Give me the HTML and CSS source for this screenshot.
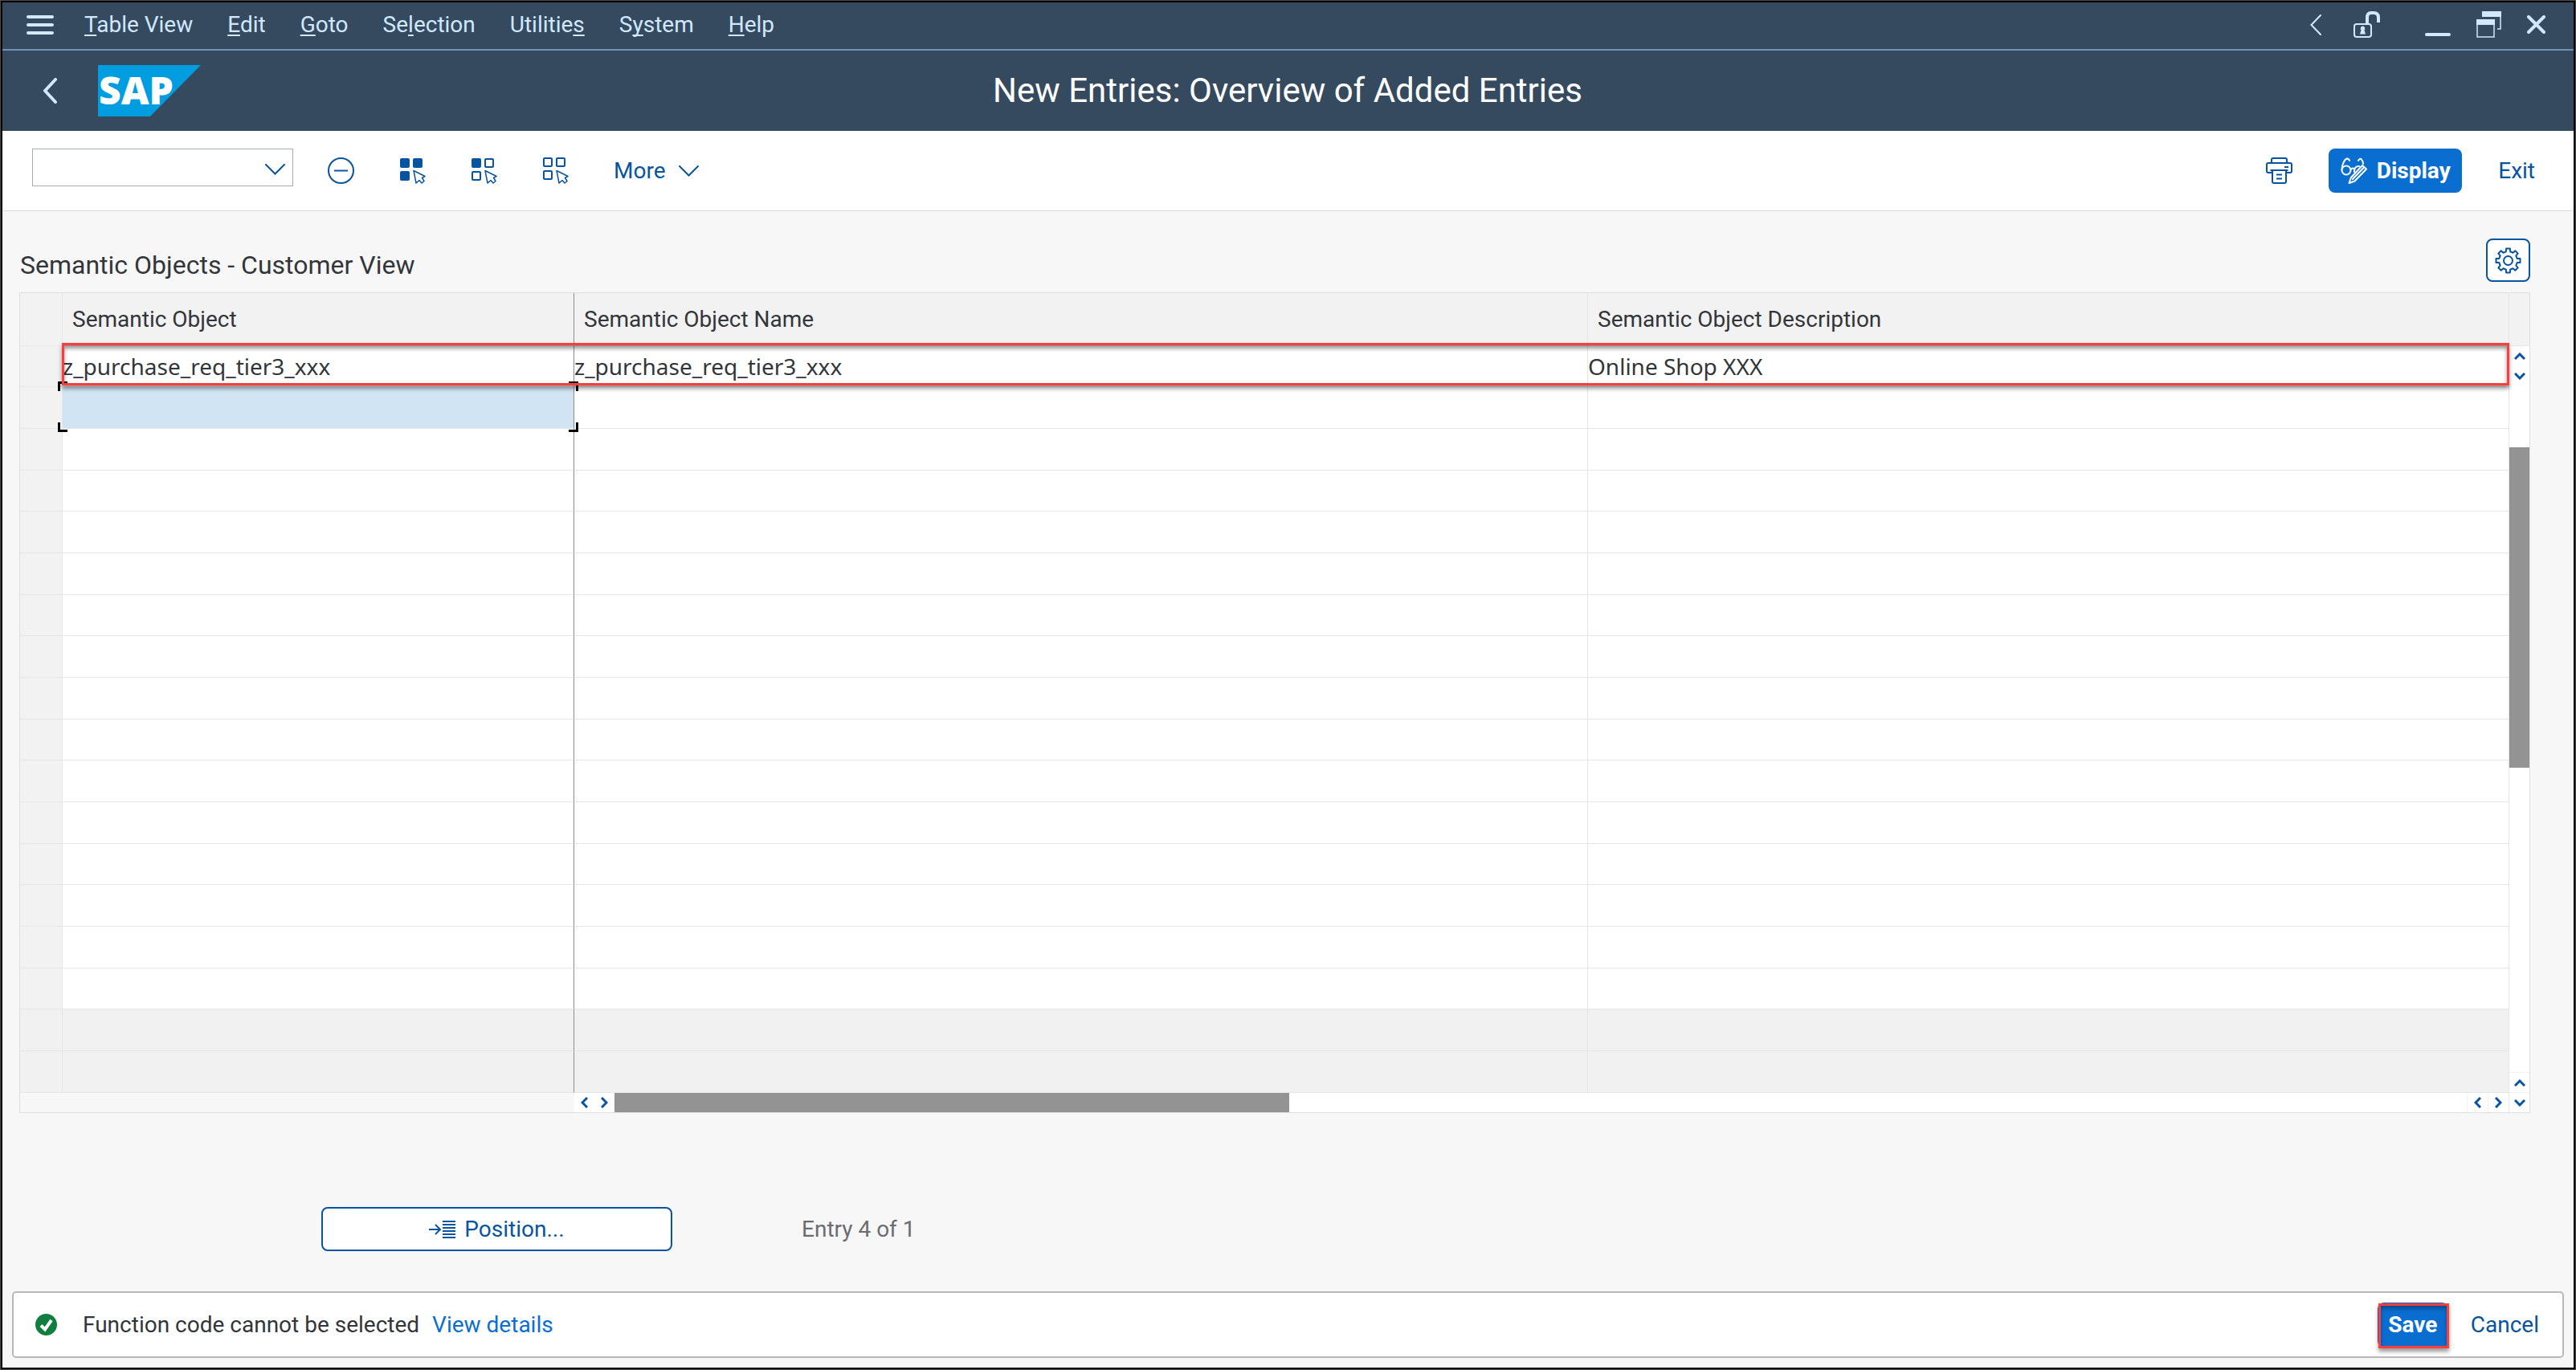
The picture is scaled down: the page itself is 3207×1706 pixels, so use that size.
FILE: index.html
```html
<!DOCTYPE html>
<html lang="en">
<head>
<meta charset="utf-8">
<title>New Entries: Overview of Added Entries</title>
<link rel="stylesheet" href="styles.css">
</head>
<body>
<nav class="menubar" aria-label="Menu bar">
  <button class="icon-btn hamburger" aria-label="Menu"><svg width="34" height="26" viewBox="0 0 34 26"><path d="M2 3H32M2 13H32M2 23H32" stroke="currentColor" stroke-width="4" stroke-linecap="round"/></svg></button>
  <div class="menus">
    <button><u>T</u>able View</button>
    <button><u>E</u>dit</button>
    <button><u>G</u>oto</button>
    <button>Se<u>l</u>ection</button>
    <button>Utilitie<u>s</u></button>
    <button>S<u>y</u>stem</button>
    <button><u>H</u>elp</button>
  </div>
  <div class="session-tools">
    <button class="icon-btn" aria-label="Collapse"><svg width="14" height="26" viewBox="0 0 14 26"><path d="M13 1L1.500 13L13 25" fill="none" stroke="currentColor" stroke-width="2" stroke-linecap="round"/></svg></button>
    <button class="icon-btn" aria-label="Unlock"><svg width="33" height="33" viewBox="0 0 33 33" fill="none" stroke="currentColor"><rect x="1" y="16" width="21" height="16" rx="3" stroke-width="2"/><path d="M17 15V8Q17 2 22 2H25Q31 2 31 8V14" stroke-width="4"/><path d="M11.500 18.500a3 3 0 0 1 2 5l1.500 5h-7l1.500-5a3 3 0 0 1 2-5z" fill="currentColor" stroke="none"/></svg></button>
  </div>
  <div class="window-tools">
    <button class="icon-btn" aria-label="Minimize"><svg width="32" height="33" viewBox="0 0 32 33"><path d="M2 29H30" stroke="currentColor" stroke-width="4" stroke-linecap="round"/></svg></button>
    <button class="icon-btn" aria-label="Restore"><svg width="31" height="33" viewBox="0 0 31 33" fill="none" stroke="currentColor" stroke-width="1.500"><path d="M7 0H31V7H7ZM0 10H23V17H0Z" fill="currentColor" stroke="none"/><path d="M1 16V32H22V16M30 6V22H26"/></svg></button>
    <button class="icon-btn" aria-label="Close"><svg width="23" height="23" viewBox="0 0 23 23"><path d="M2 2L21 21M21 2L2 21" stroke="currentColor" stroke-width="4" stroke-linecap="round"/></svg></button>
  </div>
</nav>

<header class="header">
  <div class="brand">
    <button class="icon-btn" aria-label="Back"><svg width="18" height="32" viewBox="0 0 18 32"><path d="M16 2L3 16L16 30" fill="none" stroke="currentColor" stroke-width="4" stroke-linecap="round" stroke-linejoin="round"/></svg></button>
    <svg class="logo" width="128" height="64" viewBox="0 0 128 64" role="img" aria-label="SAP"><path d="M0 0H128L65 64H0Z" fill="#009de0"/><text x="1" y="49" fill="#fff">SAP</text></svg>
  </div>
  <h1>New Entries: Overview of Added Entries</h1>
</header>

<div class="toolbar">
  <div class="combo">
    <select aria-label="Command"><option></option></select>
    <svg class="combo-arrow" width="25" height="14" viewBox="0 0 25 14"><path d="M1 1L12.500 12.500L24 1" fill="none" stroke="currentColor" stroke-width="2" stroke-linecap="round"/></svg>
  </div>
  <div class="tools">
    <button class="icon-btn" aria-label="Delete"><svg width="33" height="33" viewBox="0 0 33 33" fill="none" stroke="currentColor" stroke-width="2"><circle cx="16.500" cy="16.500" r="15.500"/><path d="M8 16.500H25"/></svg></button>
    <button class="icon-btn" aria-label="Select all"><svg width="33" height="33" viewBox="0 0 33 33" fill="none" stroke="currentColor"><g fill="currentColor" stroke-width="2"><rect x="2" y="2" width="10" height="10" rx="1"/><rect x="18" y="2" width="10" height="10" rx="1"/><rect x="2" y="18" width="10" height="10" rx="1"/></g><path d="M18 16.500L32 23.500L28.500 25.500L31 29.500L28 32L25 28.500L21 32Z" stroke-width="1.500" stroke-linejoin="round"/></svg></button>
    <button class="icon-btn" aria-label="Select block"><svg width="33" height="33" viewBox="0 0 33 33" fill="none" stroke="currentColor"><g stroke-width="2"><rect x="2" y="2" width="10" height="10" rx="1" fill="currentColor"/><rect x="18" y="2" width="10" height="10" rx="1"/><rect x="2" y="18" width="10" height="10" rx="1"/></g><path d="M18 16.500L32 23.500L28.500 25.500L31 29.500L28 32L25 28.500L21 32Z" stroke-width="1.500" stroke-linejoin="round"/></svg></button>
    <button class="icon-btn" aria-label="Deselect all"><svg width="33" height="33" viewBox="0 0 33 33" fill="none" stroke="currentColor"><g stroke-width="2"><rect x="2" y="1" width="10" height="10" rx="1"/><rect x="18" y="1" width="10" height="10" rx="1"/><rect x="2" y="17" width="10" height="10" rx="1"/></g><path d="M18 16.500L32 23.500L28.500 25.500L31 29.500L28 32L25 28.500L21 32Z" stroke-width="1.500" stroke-linejoin="round"/></svg></button>
    <button class="more">More <svg width="25" height="14" viewBox="0 0 25 14"><path d="M1 1L12.500 12.500L24 1" fill="none" stroke="currentColor" stroke-width="2" stroke-linecap="round"/></svg></button>
  </div>
  <div class="tools-end">
    <button class="icon-btn" aria-label="Print"><svg width="33" height="33" viewBox="0 0 33 33" fill="none" stroke="currentColor" stroke-width="2" stroke-linejoin="round"><path d="M7 6V3Q7 1 9 1H24Q26 1 26 3V6M7 19H3Q1 19 1 17V9Q1 7 3 7H30Q32 7 32 9V17Q32 19 30 19H26"/><path d="M5.500 16H27.500M8 16V30Q8 32 10 32H23Q25 32 25 30V16M13 21.500H20M13 26.500H20M23 12H28"/></svg></button>
    <button class="primary"><svg width="33" height="33" viewBox="0 0 33 33" fill="none" stroke="currentColor" stroke-width="2" stroke-linejoin="round" stroke-linecap="round"><circle cx="7" cy="16" r="5.500"/><path d="M1.500 15C1.500 9 5 2 8 1.500Q10 1.500 11 4M12.500 15Q15 12 17.500 15M17 18Q16.500 11 23 11M22 4Q24 .5 26 2.500Q28 5 28 8"/><path d="M10.500 32L13 25L27 10L32 14.500L17.500 29.500ZM15 27L28 13.500"/></svg>Display</button>
    <button class="text-btn">Exit</button>
  </div>
</div>

<main>
  <div class="title-row">
    <h2>Semantic Objects - Customer View</h2>
    <button class="settings" aria-label="Table settings"><svg width="33" height="33" viewBox="-16.500 -16.500 33 33" fill="none" stroke="currentColor" stroke-width="2" stroke-linejoin="round"><circle r="5.500"/><path d="M-2.600-11.200L-2.400-15 2.400-15 2.600-11.200 6.100-9.800 8.800-12.200 12.200-8.800 9.800-6.100 11.200-2.600 15-2.400 15 2.400 11.200 2.600 9.800 6.100 12.200 8.800 8.800 12.200 6.100 9.800 2.600 11.200 2.400 15 -2.400 15 -2.600 11.200 -6.100 9.800 -8.800 12.200 -12.200 8.800 -9.800 6.100 -11.200 2.600 -15 2.400 -15-2.400 -11.200-2.600 -9.800-6.100 -12.200-8.800 -8.800-12.200 -6.100-9.800Z"/></svg></button>
  </div>

  <div class="grid-frame">
    <div class="grid-body">
      <table>
        <colgroup><col class="c-sel"><col class="c-obj"><col class="c-name"><col></colgroup>
        <thead><tr><th></th><th scope="col">Semantic Object</th><th scope="col">Semantic Object Name</th><th scope="col">Semantic Object Description</th></tr></thead>
        <tbody>
          <tr class="marked"><td></td><td>z_purchase_req_tier3_xxx</td><td>z_purchase_req_tier3_xxx</td><td>Online Shop XXX<span class="row-mark"></span></td></tr>
          <tr><td></td><td class="active"><input type="text" aria-label="Semantic Object"><span class="focus-corners"></span></td><td></td><td></td></tr>
          <tr><td></td><td></td><td></td><td></td></tr>
          <tr><td></td><td></td><td></td><td></td></tr>
          <tr><td></td><td></td><td></td><td></td></tr>
          <tr><td></td><td></td><td></td><td></td></tr>
          <tr><td></td><td></td><td></td><td></td></tr>
          <tr><td></td><td></td><td></td><td></td></tr>
          <tr><td></td><td></td><td></td><td></td></tr>
          <tr><td></td><td></td><td></td><td></td></tr>
          <tr><td></td><td></td><td></td><td></td></tr>
          <tr><td></td><td></td><td></td><td></td></tr>
          <tr><td></td><td></td><td></td><td></td></tr>
          <tr><td></td><td></td><td></td><td></td></tr>
          <tr><td></td><td></td><td></td><td></td></tr>
          <tr><td></td><td></td><td></td><td></td></tr>
          <tr class="unused"><td></td><td></td><td></td><td></td></tr>
          <tr class="unused"><td></td><td></td><td></td><td></td></tr>
        </tbody>
      </table>
      <div class="hscroll">
        <span class="frozen"></span>
        <button class="step" aria-label="Scroll left"><svg width="9" height="14" viewBox="0 0 9 14"><path d="M8 1L2 7L8 13"/></svg></button>
        <button class="step" aria-label="Scroll right"><svg width="9" height="14" viewBox="0 0 9 14"><path d="M1 1L7 7L1 13"/></svg></button>
        <span class="thumb"></span>
        <span class="rest"></span>
        <button class="step" aria-label="Page left"><svg width="9" height="14" viewBox="0 0 9 14"><path d="M8 1L2 7L8 13"/></svg></button>
        <button class="step" aria-label="Page right"><svg width="9" height="14" viewBox="0 0 9 14"><path d="M1 1L7 7L1 13"/></svg></button>
      </div>
    </div>
    <div class="vscroll">
      <span class="corner"></span>
      <button class="step" aria-label="Scroll up"><svg width="14" height="9" viewBox="0 0 14 9"><path d="M1 8L7 2L13 8"/></svg></button>
      <button class="step" aria-label="Scroll down"><svg width="14" height="9" viewBox="0 0 14 9"><path d="M1 1L7 7L13 1"/></svg></button>
      <span class="lead"></span>
      <span class="thumb"></span>
      <span class="rest"></span>
      <button class="step" aria-label="Page up"><svg width="14" height="9" viewBox="0 0 14 9"><path d="M1 8L7 2L13 8"/></svg></button>
      <button class="step" aria-label="Page down"><svg width="14" height="9" viewBox="0 0 14 9"><path d="M1 1L7 7L13 1"/></svg></button>
    </div>
  </div>

  <div class="position-row">
    <button class="position"><svg width="33" height="22" viewBox="0 0 33 22" fill="none" stroke="currentColor" stroke-width="2"><path d="M0 11H13M8 5L14 11L8 17"/><path d="M17 1H33M17 5H33M17 9H33M17 13H33M17 17H33M17 21H33"/></svg>Position...</button>
    <span class="entry">Entry 4 of 1</span>
  </div>
</main>

<footer class="footer">
  <svg class="status" width="27" height="27" viewBox="0 0 27 27"><circle cx="13.500" cy="13.500" r="13.500" fill="#107e3e"/><path d="M7 14.500L12 19.500L20 8" fill="none" stroke="#fff" stroke-width="4"/></svg>
  <span>Function code cannot be selected</span>
  <a href="#details">View details</a>
  <div class="footer-actions">
    <button class="save">Save<span class="save-mark"></span></button>
    <button class="text-btn">Cancel</button>
  </div>
</footer>
</body>
</html>
```
FILE: styles.css
```css
:root {
  --shell: #354a5f;
  --shell-text: #d1e8ff;
  --blue: #0854a0;
  --primary: #0a6ed1;
  --text: #32363a;
  --line: #e5e5e5;
  --mark: #ff3d3d;
}

* { box-sizing: border-box; }

body {
  margin: 0;
  min-height: 100vh;
  display: flex;
  flex-direction: column;
  border: 3px solid #000;
  outline: 1px solid #4a4a4a;
  outline-offset: -1px;
  background: #f7f7f7;
  color: var(--text);
  font: 28px/36px Roboto, "Liberation Sans", sans-serif;
}

button, select, input {
  margin: 0;
  padding: 0;
  border: 0;
  background: none;
  color: inherit;
  font: inherit;
}

svg { display: block; flex: none; }
h1, h2 { margin: 0; font-weight: 400; }
.icon-btn { display: flex; }

/* Menu bar */
.menubar {
  display: flex;
  align-items: center;
  height: 60px;
  padding: 0 35px 3px 30px;
  border-bottom: 2px solid #7190b7;
  background: var(--shell);
  color: var(--shell-text);
}
.menus { display: flex; gap: 43px; margin-left: 38px; }
.menus u { text-decoration-thickness: 2px; text-underline-offset: 3px; text-decoration-skip-ink: none; }
.session-tools { display: flex; align-items: center; gap: 40px; margin-left: auto; }
.window-tools { display: flex; align-items: center; gap: 32px; margin-left: 56px; }

/* Header */
.header {
  display: grid;
  grid-template-columns: 1fr auto 1fr;
  align-items: center;
  height: 100px;
  padding: 0 51px 0 50px;
  background: var(--shell);
  color: #fff;
}
.brand { display: flex; align-items: center; gap: 51px; color: var(--shell-text); }
.logo { overflow: visible; }
.logo text { font: 800 48px/60px "Open Sans", "Noto Sans", sans-serif; }
h1 { font-size: 42px; line-height: 52px; }

/* Toolbar */
.toolbar {
  display: flex;
  align-items: center;
  min-height: 100px;
  padding: 22px 48px 22px 37px;
  border-bottom: 1px solid #d9d9d9;
  background: #fff;
  color: var(--blue);
}
.combo { position: relative; align-self: flex-start; width: 325px; height: 47px; }
.combo select {
  width: 100%;
  height: 100%;
  border: 1px solid #a5acb3;
  background: #fff;
  appearance: none;
}
.combo-arrow { position: absolute; right: 10px; top: 19px; pointer-events: none; }
.tools { display: flex; align-items: center; gap: 56px; margin-left: 43px; }
.more { display: flex; align-items: center; gap: 16px; }
.tools-end { display: flex; align-items: center; gap: 45px; margin-left: auto; }
.primary {
  display: flex;
  align-items: center;
  justify-content: center;
  gap: 12px;
  min-width: 166px;
  height: 55px;
  border-radius: 8px;
  background: var(--primary);
  color: #fff;
  font-weight: 700;
}
.text-btn { color: var(--blue); }

/* Content */
main { flex: 1; padding: 34px 54px 0 21px; }
.title-row { display: flex; justify-content: space-between; align-items: flex-end; margin-bottom: 13px; }
h2 { font-size: 32px; line-height: 42px; padding-left: 1px; }
.settings {
  display: grid;
  place-items: center;
  width: 55px;
  height: 54px;
  border: 2px solid var(--blue);
  border-radius: 8px;
  background: #fff;
  color: var(--blue);
}

.grid-frame { display: flex; border: 1px solid #dedede; }
.grid-body { flex: 1; min-width: 0; }
table { width: 100%; table-layout: fixed; border-collapse: separate; border-spacing: 0; }
.c-sel { width: 53px; }
.c-obj { width: 637px; }
.c-name { width: 1262px; }
th, td {
  padding: 0;
  border-right: 1px solid var(--line);
  border-bottom: 1px solid var(--line);
  text-align: left;
  font-weight: 400;
  white-space: nowrap;
}
th { height: 66px; padding-left: 12px; background: #f2f2f2; }
td { height: 52px; background: #fff; font-family: "Noto Sans", sans-serif; }
tbody tr:nth-child(3n+1) td { height: 51px; }
td:first-child { background: #f2f2f2; }
.unused td { background: #f1f1f1; }
th:nth-child(2), td:nth-child(2) { border-right-color: #8c8c8c; }
th:last-child, td:last-child { border-right: 0; }

.marked { position: relative; }
.row-mark {
  position: absolute;
  z-index: 2;
  inset: -4px -1px 2px 52px;
  border: 3px solid var(--mark);
  box-shadow: 0 4px 5px rgba(0, 0, 0, .4), inset 0 4px 5px rgba(0, 0, 0, .4);
  pointer-events: none;
}
td.active { position: relative; background: #d1e4f4; }
.active input { display: block; width: 100%; height: 51px; outline: 0; }
.focus-corners {
  --h: linear-gradient(#000, #000);
  position: absolute;
  inset: -7px -6px -5px -6px;
  background:
    var(--h) left top / 12px 3px, var(--h) left top / 3px 12px,
    var(--h) right top / 12px 3px, var(--h) right top / 3px 12px,
    var(--h) left bottom / 12px 3px, var(--h) left bottom / 3px 12px,
    var(--h) right bottom / 12px 3px, var(--h) right bottom / 3px 12px;
  background-repeat: no-repeat;
  pointer-events: none;
}

.step { display: grid; place-items: center; flex: none; width: 25px; height: 25px; background: #fff; }
.step path { fill: none; stroke: var(--blue); stroke-width: 3px; }
.thumb { background: #939393; }
.hscroll { display: flex; height: 24px; background: #fff; }
.hscroll .step { height: 24px; }
.hscroll .rest ~ .step { width: 26px; border-left: 1px solid #f2f2f2; }
.frozen { flex: none; width: 690px; background: #f7f7f7; }
.hscroll .thumb { flex: 840; }
.hscroll .rest { flex: 1467; }
.vscroll { display: flex; flex-direction: column; width: 26px; border-left: 1px solid var(--line); background: #fff; }
.corner { flex: none; height: 66px; border-bottom: 1px solid var(--line); background: #f2f2f2; }
.vscroll .rest ~ .step { border-top: 1px solid #f2f2f2; }
.vscroll .lead { flex: 76; }
.vscroll .thumb { flex: 399; }
.vscroll .rest { flex: 379; }

.position-row { display: flex; align-items: center; gap: 161px; margin-top: 117px; padding-left: 376px; }
.position {
  display: flex;
  align-items: center;
  justify-content: center;
  gap: 11px;
  width: 437px;
  height: 55px;
  border: 2px solid var(--blue);
  border-radius: 8px;
  background: #fff;
  color: var(--blue);
}
.entry { color: #6a6d70; }

/* Message footer */
.footer {
  display: flex;
  align-items: center;
  height: 83px;
  margin: 0 12px;
  margin-bottom: 12px;
  padding: 0 29px 0 27px;
  border: 2px solid #b8b8b8;
  border-radius: 5px;
  background: #fff;
}
.status { margin-right: 32px; }
.footer a { margin-left: 16px; color: var(--primary); text-decoration: none; }
.footer-actions { display: flex; align-items: center; gap: 28px; margin-left: auto; }
.save {
  position: relative;
  width: 88px;
  height: 56px;
  border-radius: 8px;
  background: var(--primary);
  color: #fff;
  font-weight: 700;
}
.save-mark {
  position: absolute;
  inset: 1px -1px -1px 1px;
  border: 3px solid var(--mark);
  box-shadow: 0 4px 5px rgba(0, 0, 0, .4), inset 0 4px 5px rgba(0, 0, 0, .3);
}
```
